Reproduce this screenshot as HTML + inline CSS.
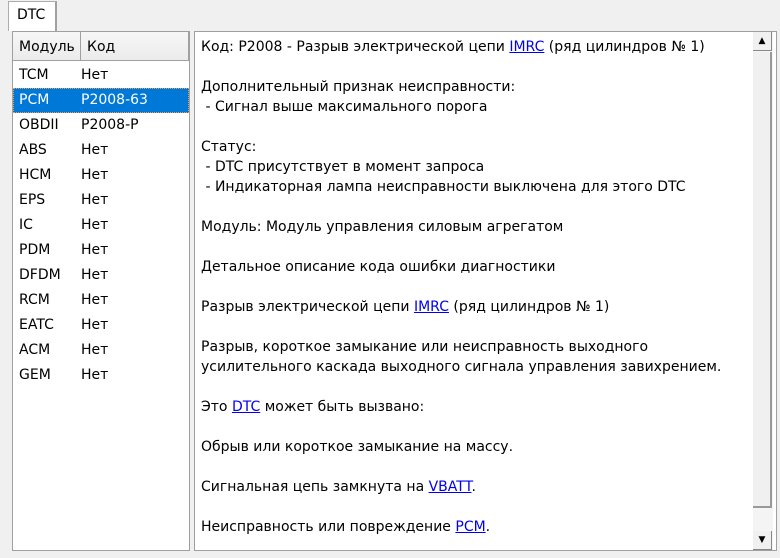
<!DOCTYPE html>
<html><head><meta charset="utf-8"><style>
body{margin:0;width:780px;height:558px;background:#f0f0f0;font-family:"DejaVu Sans","Liberation Sans",sans-serif;font-size:14px;color:#000;position:relative;overflow:hidden}
.tab{position:absolute;left:8px;top:1px;width:49px;height:30px;background:#fff;border:1px solid #adadad;border-bottom:none;border-right:2px solid #a0a0a0;box-sizing:border-box;padding:5px 0 0 8px}
.list{position:absolute;left:12px;top:31px;width:178px;height:520px;background:#fff;border:1px solid #a0a0a0;box-sizing:border-box}
.hdr{position:absolute;top:0;height:29px;border-right:1px solid #a0a0a0;border-bottom:1px solid #a0a0a0;box-sizing:border-box;padding:7px 0 0 6px;background:linear-gradient(#f7f7f7,#ebebeb)}
.row{position:absolute;left:0;width:176px;height:25px;line-height:25px}
.row span{position:absolute}
.sel{background:#0078d7;color:#fff;outline:1px dotted #f0a040;outline-offset:-1px}
.txt{position:absolute;left:194px;top:31px;width:583px;height:520px;background:#fff;border:1px solid #a0a0a0;box-sizing:border-box}
.t{position:absolute;left:6px;top:5px;line-height:20px;white-space:pre}
a{color:#0000ee;text-decoration:underline}
.sb{position:absolute;left:558px;top:0;width:20px;height:518px;background:#f4f4f4}
.btn{position:absolute;left:0;width:19px;height:19px;background:#f0f0f0;border-right:1px solid #888;border-bottom:1px solid #888;box-sizing:border-box;font-size:9px;text-align:center;line-height:18px}
.thumb{position:absolute;left:0;top:20px;width:19px;height:456px;background:#f0f0f0;border-right:2px solid #999;border-bottom:2px solid #999;box-sizing:border-box}
</style></head><body>
<div class="tab">DTC</div>
<div class="list">
<div class="hdr" style="left:0;width:68px">Модуль</div>
<div class="hdr" style="left:68px;width:108px">Код</div>
<div class="row" style="top:31px"><span style="left:6px">TCM</span><span style="left:68px">Нет</span></div>
<div class="row sel" style="top:56px"><span style="left:6px">PCM</span><span style="left:68px">P2008-63</span></div>
<div class="row" style="top:81px"><span style="left:6px">OBDII</span><span style="left:68px">P2008-P</span></div>
<div class="row" style="top:106px"><span style="left:6px">ABS</span><span style="left:68px">Нет</span></div>
<div class="row" style="top:131px"><span style="left:6px">HCM</span><span style="left:68px">Нет</span></div>
<div class="row" style="top:156px"><span style="left:6px">EPS</span><span style="left:68px">Нет</span></div>
<div class="row" style="top:181px"><span style="left:6px">IC</span><span style="left:68px">Нет</span></div>
<div class="row" style="top:206px"><span style="left:6px">PDM</span><span style="left:68px">Нет</span></div>
<div class="row" style="top:231px"><span style="left:6px">DFDM</span><span style="left:68px">Нет</span></div>
<div class="row" style="top:256px"><span style="left:6px">RCM</span><span style="left:68px">Нет</span></div>
<div class="row" style="top:281px"><span style="left:6px">EATC</span><span style="left:68px">Нет</span></div>
<div class="row" style="top:306px"><span style="left:6px">ACM</span><span style="left:68px">Нет</span></div>
<div class="row" style="top:331px"><span style="left:6px">GEM</span><span style="left:68px">Нет</span></div>
</div>
<div class="txt">
<div class="t">Код: P2008 - Разрыв электрической цепи <a>IMRC</a> (ряд цилиндров № 1)

Дополнительный признак неисправности:
 - Сигнал выше максимального порога

Статус:
 - DTC присутствует в момент запроса
 - Индикаторная лампа неисправности выключена для этого DTC

Модуль: Модуль управления силовым агрегатом

Детальное описание кода ошибки диагностики

Разрыв электрической цепи <a>IMRC</a> (ряд цилиндров № 1)

Разрыв, короткое замыкание или неисправность выходного
усилительного каскада выходного сигнала управления завихрением.

Это <a>DTC</a> может быть вызвано:

Обрыв или короткое замыкание на массу.

Сигнальная цепь замкнута на <a>VBATT</a>.

Неисправность или повреждение <a>PCM</a>.</div>
<div class="sb">
<div class="btn" style="top:0">▲</div>
<div class="thumb"></div>
<div class="btn" style="top:499px">▼</div>
</div>
</div>
</body></html>
